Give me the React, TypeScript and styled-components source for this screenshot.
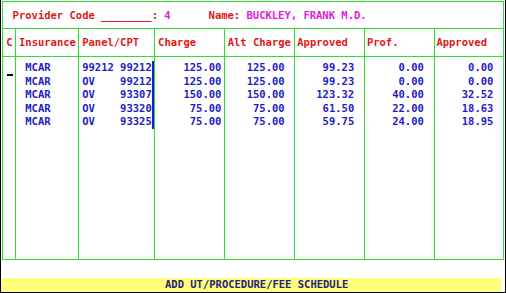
import React from "react";
import styled, { createGlobalStyle } from "styled-components";

const GREEN = "#2ee02e";
const RED = "#e01818";
const MAGENTA = "#e020e0";
const BLUE = "#1c1cc8";
const NAVY = "#24247c";

const GlobalStyle = createGlobalStyle`
	html, body {
		margin: 0;
		padding: 0;
		background: #ffffff;
	}
	body {
		font-family: "DejaVu Sans Mono", "Liberation Mono", monospace;
		font-size: 10.5px;
		font-weight: bold;
	}
`;

const Screen = styled.div`
	width: 506px;
	height: 293px;
	box-sizing: border-box;
	border-left: 1px solid #000;
	border-right: 1px solid #000;
	border-bottom: 1px solid #000;
	display: flex;
	flex-direction: column;
	white-space: pre;
`;

const Frame = styled.div`
	margin: 1px 0 0 1px;
	width: 502px;
	height: 259px;
	box-sizing: border-box;
	border: 1px solid ${GREEN};
	display: flex;
	flex-direction: column;
`;

const TitleBar = styled.div`
	height: 27px;
	box-sizing: border-box;
	border-bottom: 1px solid ${GREEN};
	padding-left: 9.6px;
	line-height: 26px;
`;

const Text = styled.span<{ $tone: string }>`
	color: ${(p) => p.$tone};
`;

const Grid = styled.div`
	flex: 1;
	display: grid;
	grid-template-columns: 13px 63px 76px 70px 70px 70px 70px 68px;
	grid-template-rows: 28px 1fr;
`;

const HeadCell = styled.div<{ $pad: number; $last?: boolean }>`
	box-sizing: border-box;
	border-bottom: 1px solid ${GREEN};
	border-right: ${(p) => (p.$last ? "none" : `1px solid ${GREEN}`)};
	padding-left: ${(p) => p.$pad}px;
	line-height: 27px;
	color: ${RED};
	overflow: hidden;
`;

const BodyCell = styled.div<{ $last?: boolean }>`
	box-sizing: border-box;
	border-right: ${(p) => (p.$last ? "none" : `1px solid ${GREEN}`)};
	padding-top: 4px;
`;

const Entries = styled.div<{ $right?: boolean; $padL?: number; $padR?: number; $mark?: boolean }>`
	text-align: ${(p) => (p.$right ? "right" : "left")};
	padding-left: ${(p) => p.$padL ?? 0}px;
	padding-right: ${(p) => p.$padR ?? 0}px;
	border-right: ${(p) => (p.$mark ? `2px solid ${BLUE}` : "none")};
	color: ${BLUE};
	line-height: 13.5px;
`;

const Cursor = styled.div`
	margin: 13px 0 0 3.5px;
	width: 6px;
	height: 2px;
	background: #000;
`;

const StatusBar = styled.div`
	margin-top: 18px;
	width: 500px;
	height: 14px;
	background: #ffff7c;
	padding-left: 164px;
	box-sizing: border-box;
	line-height: 13px;
	color: ${NAVY};
`;

type Row = {
	ins: string;
	panel: string;
	charge: string;
	alt: string;
	appr: string;
	prof: string;
	appr2: string;
};

const rows: Row[] = [
	{ ins: "MCAR", panel: "99212 99212", charge: "125.00", alt: "125.00", appr: "99.23", prof: "0.00", appr2: "0.00" },
	{ ins: "MCAR", panel: "OV    99212", charge: "125.00", alt: "125.00", appr: "99.23", prof: "0.00", appr2: "0.00" },
	{ ins: "MCAR", panel: "OV    93307", charge: "150.00", alt: "150.00", appr: "123.32", prof: "40.00", appr2: "32.52" },
	{ ins: "MCAR", panel: "OV    93320", charge: "75.00", alt: "75.00", appr: "61.50", prof: "22.00", appr2: "18.63" },
	{ ins: "MCAR", panel: "OV    93325", charge: "75.00", alt: "75.00", appr: "59.75", prof: "24.00", appr2: "18.95" },
];

type Column = {
	title: string;
	head: number;
	key?: keyof Row;
	right?: boolean;
	padL?: number;
	padR?: number;
	mark?: boolean;
};

const columns: Column[] = [
	{ title: "C", head: 3.3 },
	{ title: "Insurance", head: 3, key: "ins", padL: 9.3 },
	{ title: "Panel/CPT", head: 3.2, key: "panel", padL: 3.2, mark: true },
	{ title: "Charge", head: 3.1, key: "charge", right: true, padR: 2.6 },
	{ title: "Alt Charge", head: 2.7, key: "alt", right: true, padR: 9.4 },
	{ title: "Approved", head: 2.3, key: "appr", right: true, padR: 9.8 },
	{ title: "Prof.", head: 1.9, key: "prof", right: true, padR: 10.2 },
	{ title: "Approved", head: 1.4, key: "appr2", right: true, padR: 9.6 },
];

export default function App() {
	return (
		<>
			<GlobalStyle />
			<Screen>
				<Frame>
					<TitleBar>
						<Text $tone={RED}>Provider Code ________: </Text>
						<Text $tone={MAGENTA}>4</Text>
						<Text $tone={RED}>      Name: </Text>
						<Text $tone={MAGENTA}>BUCKLEY, FRANK M.D.</Text>
					</TitleBar>
					<Grid>
						{columns.map((col, i) => (
							<HeadCell key={`h${i}`} $pad={col.head} $last={i === columns.length - 1}>
								{col.title}
							</HeadCell>
						))}
						{columns.map((col, i) => (
							<BodyCell key={`b${i}`} $last={i === columns.length - 1}>
								{col.key ? (
									<Entries $right={col.right} $padL={col.padL} $padR={col.padR} $mark={col.mark}>
										{rows.map((r, j) => (
											<div key={j}>{r[col.key as keyof Row]}</div>
										))}
									</Entries>
								) : (
									<Cursor />
								)}
							</BodyCell>
						))}
					</Grid>
				</Frame>
				<StatusBar>ADD UT/PROCEDURE/FEE SCHEDULE</StatusBar>
			</Screen>
		</>
	);
}
